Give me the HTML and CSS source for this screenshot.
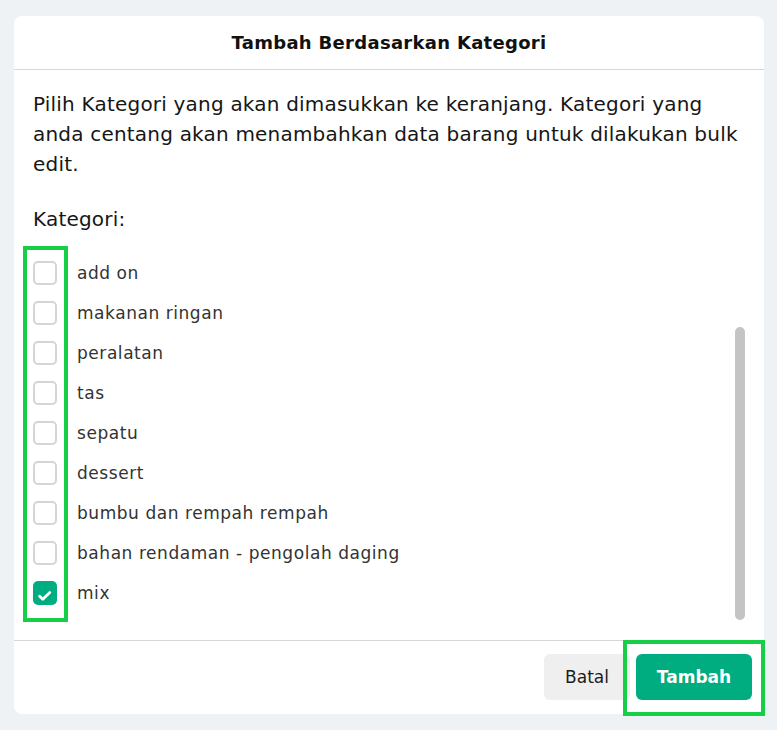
FILE: index.html
```html
<!DOCTYPE html>
<html lang="id">
<head>
<meta charset="utf-8">
<title>Tambah Berdasarkan Kategori</title>
<link rel="stylesheet" href="styles.css">
</head>
<body>
<div class="modal">
  <div class="modal-header">Tambah Berdasarkan Kategori</div>
  <div class="modal-body">
    <p class="intro">Pilih Kategori yang akan dimasukkan ke keranjang. Kategori yang<br>anda centang akan menambahkan data barang untuk dilakukan bulk<br>edit.</p>
    <div class="label">Kategori:</div>
    <ul class="cat-list">
      <li class="cat"><span class="box"></span><span class="name">add on</span></li>
      <li class="cat"><span class="box"></span><span class="name">makanan ringan</span></li>
      <li class="cat"><span class="box"></span><span class="name">peralatan</span></li>
      <li class="cat"><span class="box"></span><span class="name">tas</span></li>
      <li class="cat"><span class="box"></span><span class="name">sepatu</span></li>
      <li class="cat"><span class="box"></span><span class="name">dessert</span></li>
      <li class="cat"><span class="box"></span><span class="name">bumbu dan rempah rempah</span></li>
      <li class="cat"><span class="box"></span><span class="name">bahan rendaman - pengolah daging</span></li>
      <li class="cat"><span class="box checked"><svg width="24" height="24" viewBox="0 0 24 24"><path d="M6.6 15.2 L9.8 18.2 L16.8 11.6" fill="none" stroke="#fff" stroke-width="2.8" stroke-linecap="round" stroke-linejoin="round"/></svg></span><span class="name">mix</span></li>
    </ul>
  </div>
  <div class="modal-footer">
    <button class="btn btn-cancel">Batal</button>
    <button class="btn btn-primary">Tambah</button>
  </div>
  <div class="scroll-thumb"></div>
  <div class="hl hl-checks"></div>
  <div class="hl hl-submit"></div>
</div>
</body>
</html>
```

FILE: styles.css
```css
* { box-sizing: border-box; }
html, body { margin: 0; }
body {
  background: #eef2f5;
  padding: 16px 13px 16px 14px;
  font-family: "DejaVu Sans", sans-serif;
  color: #1c1c1c;
}
.modal {
  position: relative;
  width: 750px;
  height: 698px;
  background: #fff;
  border-radius: 8px;
  display: flex;
  flex-direction: column;
}
.modal-header {
  height: 54px;
  border-bottom: 1px solid #d6d6d6;
  display: flex;
  align-items: center;
  justify-content: center;
  font-size: 18px;
  font-weight: 600;
  letter-spacing: 0.3px;
  color: #111;
  padding-bottom: 1px;
}
.modal-body {
  flex: 1;
  padding: 19px 4px 0 19px;
}
.intro {
  margin: 0;
  font-size: 20px;
  line-height: 30px;
  letter-spacing: 0.2px;
  white-space: nowrap;
  color: #161616;
}
.label {
  margin-top: 25px;
  font-size: 20px;
  line-height: 30px;
  letter-spacing: 0.2px;
  color: #161616;
}
.cat-list {
  list-style: none;
  margin: 19px 0 0 0;
  padding: 0;
}
.cat {
  height: 40px;
  display: flex;
  align-items: center;
  gap: 20px;
}
.box {
  width: 24px;
  height: 24px;
  border: 2px solid #d5d5d5;
  border-radius: 5px;
  flex: none;
  display: block;
}
.box.checked {
  border: none;
  background: #00ad80;
}
.box svg { display: block; }
.name {
  font-size: 17px;
  letter-spacing: 0.55px;
  color: #333;
}
.modal-footer {
  height: 74px;
  border-top: 1px solid #d6d6d6;
  display: flex;
  justify-content: flex-end;
  align-items: flex-start;
  gap: 6px;
  padding: 13px 12px 0 0;
}
.btn {
  height: 46px;
  border: none;
  border-radius: 6px;
  font-family: inherit;
  font-size: 17px;
  cursor: pointer;
}
.btn-cancel {
  width: 86px;
  background: #efefef;
  color: #1c1c1c;
}
.btn-primary {
  width: 116px;
  background: #00ad80;
  color: #fff;
  font-weight: 700;
}
.scroll-thumb {
  position: absolute;
  left: 721px;
  top: 311px;
  width: 10px;
  height: 293px;
  border-radius: 5px;
  background: #c4c4c4;
}
.hl {
  position: absolute;
  border: 4px solid #17cf46;
  pointer-events: none;
}
.hl-checks {
  left: 9px;
  top: 230px;
  width: 45px;
  height: 376px;
}
.hl-submit {
  left: 609px;
  top: 624px;
  width: 142px;
  height: 76px;
}
```
